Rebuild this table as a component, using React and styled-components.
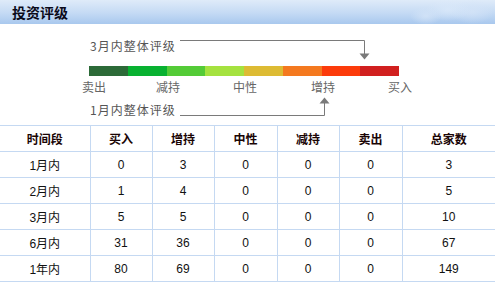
import React from "react";
import styled, { createGlobalStyle } from "styled-components";

const GlobalStyle = createGlobalStyle`
  html, body { margin: 0; padding: 0; background: #ffffff; }
  body { font-family: "Liberation Sans", "Noto Sans CJK SC", sans-serif; font-size: 12px; color: #000; }
`;

const Panel = styled.div`
  width: 495px;
  height: 284px;
  overflow: hidden;
  background: #fff;
`;

const HeaderBar = styled.div`
  position: relative;
  height: 24px;
  display: flex;
  align-items: center;
  padding-left: 12px;
  background: linear-gradient(to bottom, #dfebf9 0%, #c4daf4 55%, #a9c8ee 100%);
  &::after {
    content: "";
    position: absolute;
    right: 3px;
    top: 0;
    width: 84px;
    height: 24px;
    background:
      radial-gradient(ellipse 16px 9px at 18px 16px, rgba(215,230,248,0.75), rgba(215,230,248,0) 100%),
      radial-gradient(ellipse 22px 11px at 40px 10px, rgba(220,234,250,0.7), rgba(220,234,250,0) 100%),
      radial-gradient(ellipse 22px 12px at 64px 12px, rgba(214,229,248,0.7), rgba(214,229,248,0) 100%);
  }
`;

const Title = styled.h2`
  margin: 0;
  font-family: "Noto Sans CJK SC", sans-serif;
  font-size: 14px;
  font-weight: 700;
  line-height: 16px;
  color: #0a0a1a;
`;

const ChartArea = styled.div`
  padding-top: 15px;
`;

const NoteRow = styled.div`
  display: grid;
  grid-template-columns: 90px 90px auto;
  align-items: ${(p) => (p.$bottom ? "end" : "start")};
  height: ${(p) => p.$h}px;
  margin-top: ${(p) => p.$mt || 0}px;
`;

const NoteText = styled.span`
  grid-column: 2;
  font-family: "Noto Sans CJK SC", sans-serif;
  font-size: 12px;
  line-height: 14px;
  letter-spacing: 1px;
  color: #555;
  white-space: nowrap;
`;

const Connector = styled.svg`
  grid-column: 3;
  display: block;
  margin-top: ${(p) => (p.$bottom ? 0 : 1)}px;
`;

const Bar = styled.div`
  display: flex;
  width: 310px;
  height: 10px;
  margin-left: 89px;
`;

const Segment = styled.div`
  flex: 1;
  background: ${(p) => p.$color};
`;

const ScaleLabels = styled.div`
  display: flex;
  padding-left: 82px;
  margin-top: 4px;
`;

const ScaleLabel = styled.span`
  margin-left: ${(p) => p.$ml}px;
  font-family: "Noto Sans CJK SC", sans-serif;
  font-size: 12px;
  line-height: 14px;
  color: #666;
  white-space: nowrap;
`;

const Table = styled.table`
  margin-top: 8px;
  width: 495px;
  border-collapse: collapse;
  table-layout: fixed;
`;

const Row = styled.tr`
  height: 26px;
`;

const HeadCell = styled.th`
  padding: 0;
  border: 1px solid #c5d9f2;
  border-left: ${(p) => (p.$first ? "none" : "1px solid #c5d9f2")};
  border-right: ${(p) => (p.$last ? "none" : "1px solid #c5d9f2")};
  font-family: "Noto Sans CJK SC", sans-serif;
  font-size: 12px;
  font-weight: 700;
  color: #1a0505;
  text-align: center;
  vertical-align: middle;
`;

const Cell = styled.td`
  padding: 0;
  border: 1px solid #c5d9f2;
  border-left: ${(p) => (p.$first ? "none" : "1px solid #c5d9f2")};
  border-right: ${(p) => (p.$last ? "none" : "1px solid #c5d9f2")};
  font-family: "Liberation Sans", "Noto Sans CJK SC", sans-serif;
  font-size: 12px;
  color: #111;
  text-align: center;
  vertical-align: middle;
`;

const colors = ["#2c6a38", "#08b131", "#54cb37", "#a5e23f", "#ddbb33", "#f4791f", "#fc3b0b", "#d1201f"];
const labels = [
  ["卖出", 0],
  ["减持", 50],
  ["中性", 53],
  ["增持", 54],
  ["买入", 53],
];
const headers = ["时间段", "买入", "增持", "中性", "减持", "卖出", "总家数"];
const widths = [90, 62, 62, 63, 62, 63, 93];
const rows = [
  ["1月内", 0, 3, 0, 0, 0, 3],
  ["2月内", 1, 4, 0, 0, 0, 5],
  ["3月内", 5, 5, 0, 0, 0, 10],
  ["6月内", 31, 36, 0, 0, 0, 67],
  ["1年内", 80, 69, 0, 0, 0, 149],
];

export default function App() {
  return (
    <Panel>
      <GlobalStyle />
      <HeaderBar>
        <Title>投资评级</Title>
      </HeaderBar>
      <ChartArea>
        <NoteRow $h={27}>
          <NoteText>3月内整体评级</NoteText>
          <Connector width="200" height="20" viewBox="0 0 200 20">
            <path d="M0 0.5 H184.5 V14" fill="none" stroke="#7a7a7a" strokeWidth="1" />
            <polygon points="179.5,13.5 189.5,13.5 184.5,19.5" fill="#7a7a7a" />
          </Connector>
        </NoteRow>
        <Bar>
          {colors.map((c) => (
            <Segment key={c} $color={c} />
          ))}
        </Bar>
        <ScaleLabels>
          {labels.map(([t, ml]) => (
            <ScaleLabel key={t} $ml={ml}>{t}</ScaleLabel>
          ))}
        </ScaleLabels>
        <NoteRow $bottom $h={23}>
          <NoteText>1月内整体评级</NoteText>
          <Connector $bottom width="200" height="20" viewBox="0 0 200 20">
            <path d="M0 18.5 H144.5 V6" fill="none" stroke="#7a7a7a" strokeWidth="1" />
            <polygon points="139.5,6.5 149.5,6.5 144.5,0.5" fill="#7a7a7a" />
          </Connector>
        </NoteRow>
      </ChartArea>
      <Table>
        <colgroup>
          {widths.map((w, i) => (
            <col key={i} style={{ width: w }} />
          ))}
        </colgroup>
        <thead>
          <Row>
            {headers.map((h, i) => (
              <HeadCell key={h} $first={i === 0} $last={i === headers.length - 1}>
                {h}
              </HeadCell>
            ))}
          </Row>
        </thead>
        <tbody>
          {rows.map((r) => (
            <Row key={r[0]}>
              {r.map((v, i) => (
                <Cell key={i} $first={i === 0} $last={i === r.length - 1}>
                  {v}
                </Cell>
              ))}
            </Row>
          ))}
        </tbody>
      </Table>
    </Panel>
  );
}
